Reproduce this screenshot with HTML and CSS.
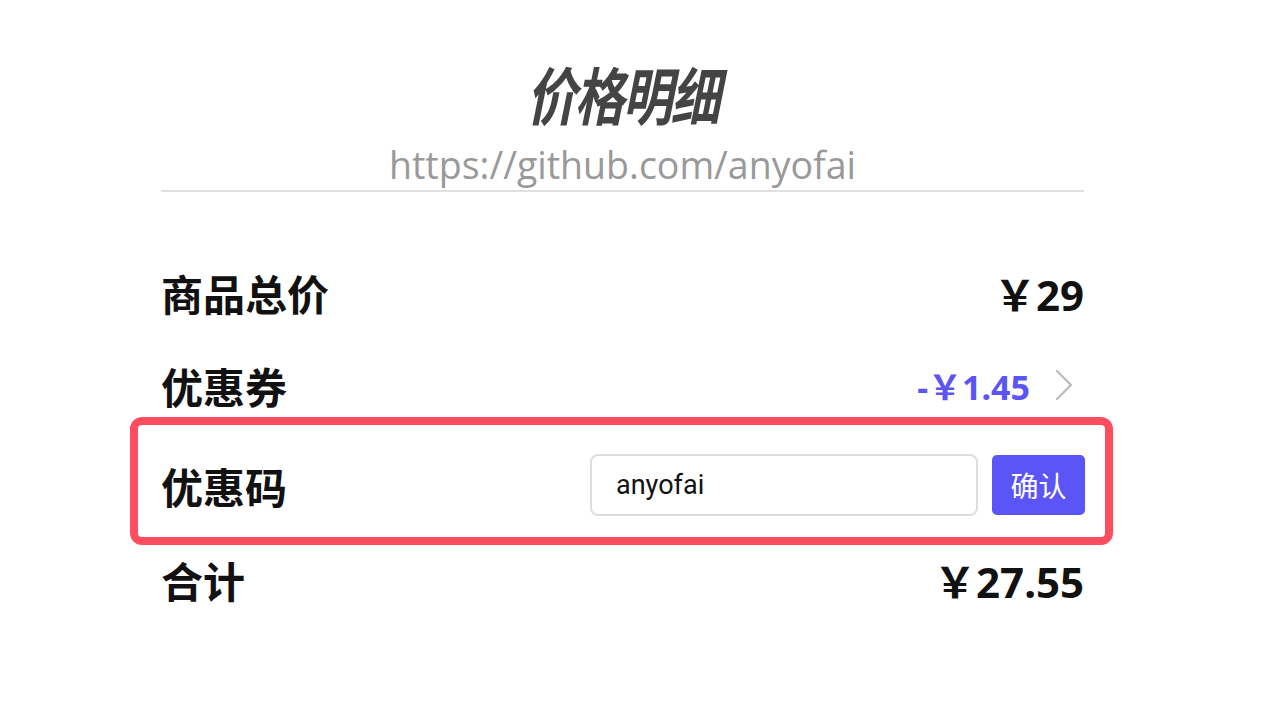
FILE: index.html
```html
<!DOCTYPE html>
<html lang="zh-CN">
<head>
<meta charset="utf-8">
<title>价格明细</title>
<link rel="stylesheet" href="styles.css">
</head>
<body>
<div class="card">
  <header class="head">
    <h1 class="title">价格明细</h1>
    <div class="url">https://github.com/anyofai</div>
  </header>
  <div class="list">
    <div class="row row-total">
      <span class="label">商品总价</span>
      <span class="value">￥29</span>
    </div>
    <div class="row row-coupon">
      <span class="label">优惠券</span>
      <span class="coupon">
        <span class="discount">-￥1.45</span>
        <svg class="chev" width="20" height="34" viewBox="0 0 20 34" aria-hidden="true">
          <path d="M3 3 L17 17 L3 31" fill="none" stroke="#bdbdbd" stroke-width="2.4" stroke-linecap="round" stroke-linejoin="round"/>
        </svg>
      </span>
    </div>
    <div class="codebox">
      <span class="label">优惠码</span>
      <div class="code-form">
        <input class="code-input" type="text" value="anyofai">
        <button class="code-btn" type="button">确认</button>
      </div>
    </div>
    <div class="row row-sum">
      <span class="label">合计</span>
      <span class="value">￥27.55</span>
    </div>
  </div>
</div>
</body>
</html>
```

FILE: styles.css
```css
* { box-sizing: border-box; }

html, body {
  margin: 0;
  padding: 0;
  background: #ffffff;
}

body {
  font-family: "Noto Sans", "Noto Sans CJK SC", sans-serif;
  color: #111111;
}

.card {
  width: 923px;
  margin-left: 161px;
}

.head {
  border-bottom: 2px solid #e0e0e0;
  text-align: center;
  padding-top: 62px;
  padding-bottom: 0;
}

.title {
  margin: 0;
  font-family: "Noto Sans CJK SC", sans-serif;
  font-size: 50px;
  line-height: 60px;
  font-weight: 700;
  font-style: italic;
  color: #444444;
  transform: scaleY(1.25);
  letter-spacing: -2px;
}

.url {
  font-family: "Open Sans", "Noto Sans", sans-serif;
  font-size: 37.5px;
  line-height: 50px;
  color: #999999;
  margin-top: 18px;
}

.list {
  padding-top: 75px;
}

.row {
  height: 50px;
  display: flex;
  align-items: center;
  justify-content: space-between;
}

.row-coupon {
  margin-top: 43px;
}

.row-sum {
  margin-top: 9px;
}

.label {
  font-family: "Noto Sans CJK SC", sans-serif;
  font-size: 42px;
  font-weight: 700;
  color: #111111;
}

.value {
  font-family: "Noto Sans", "Noto Sans CJK SC", sans-serif;
  font-size: 42px;
  font-weight: 700;
  color: #111111;
}

.coupon {
  display: flex;
  align-items: center;
  gap: 24px;
  margin-right: 10px;
}

.discount {
  font-family: "Noto Sans", "Noto Sans CJK SC", sans-serif;
  font-size: 34px;
  font-weight: 700;
  color: #5b55f5;
}

.chev {
  display: block;
}

.codebox {
  margin: 7px -29px 0 -31px;
  border: 8px solid #ff4d5f;
  border-radius: 12px;
  padding: 29px 20px 21px 23px;
  display: flex;
  align-items: center;
  justify-content: space-between;
}

.code-form {
  display: flex;
  align-items: center;
  gap: 14px;
}

.code-input {
  width: 388px;
  height: 62px;
  border: 2px solid #dddddd;
  border-radius: 8px;
  padding: 0 24px;
  font-family: "Roboto", "Noto Sans", sans-serif;
  font-size: 27px;
  color: #111111;
  outline: none;
}

.code-btn {
  width: 93px;
  height: 60px;
  border: none;
  border-radius: 5px;
  background: #5b55f7;
  color: #ffffff;
  font-family: "Noto Sans CJK SC", sans-serif;
  font-size: 28px;
  padding: 0;
}
```
